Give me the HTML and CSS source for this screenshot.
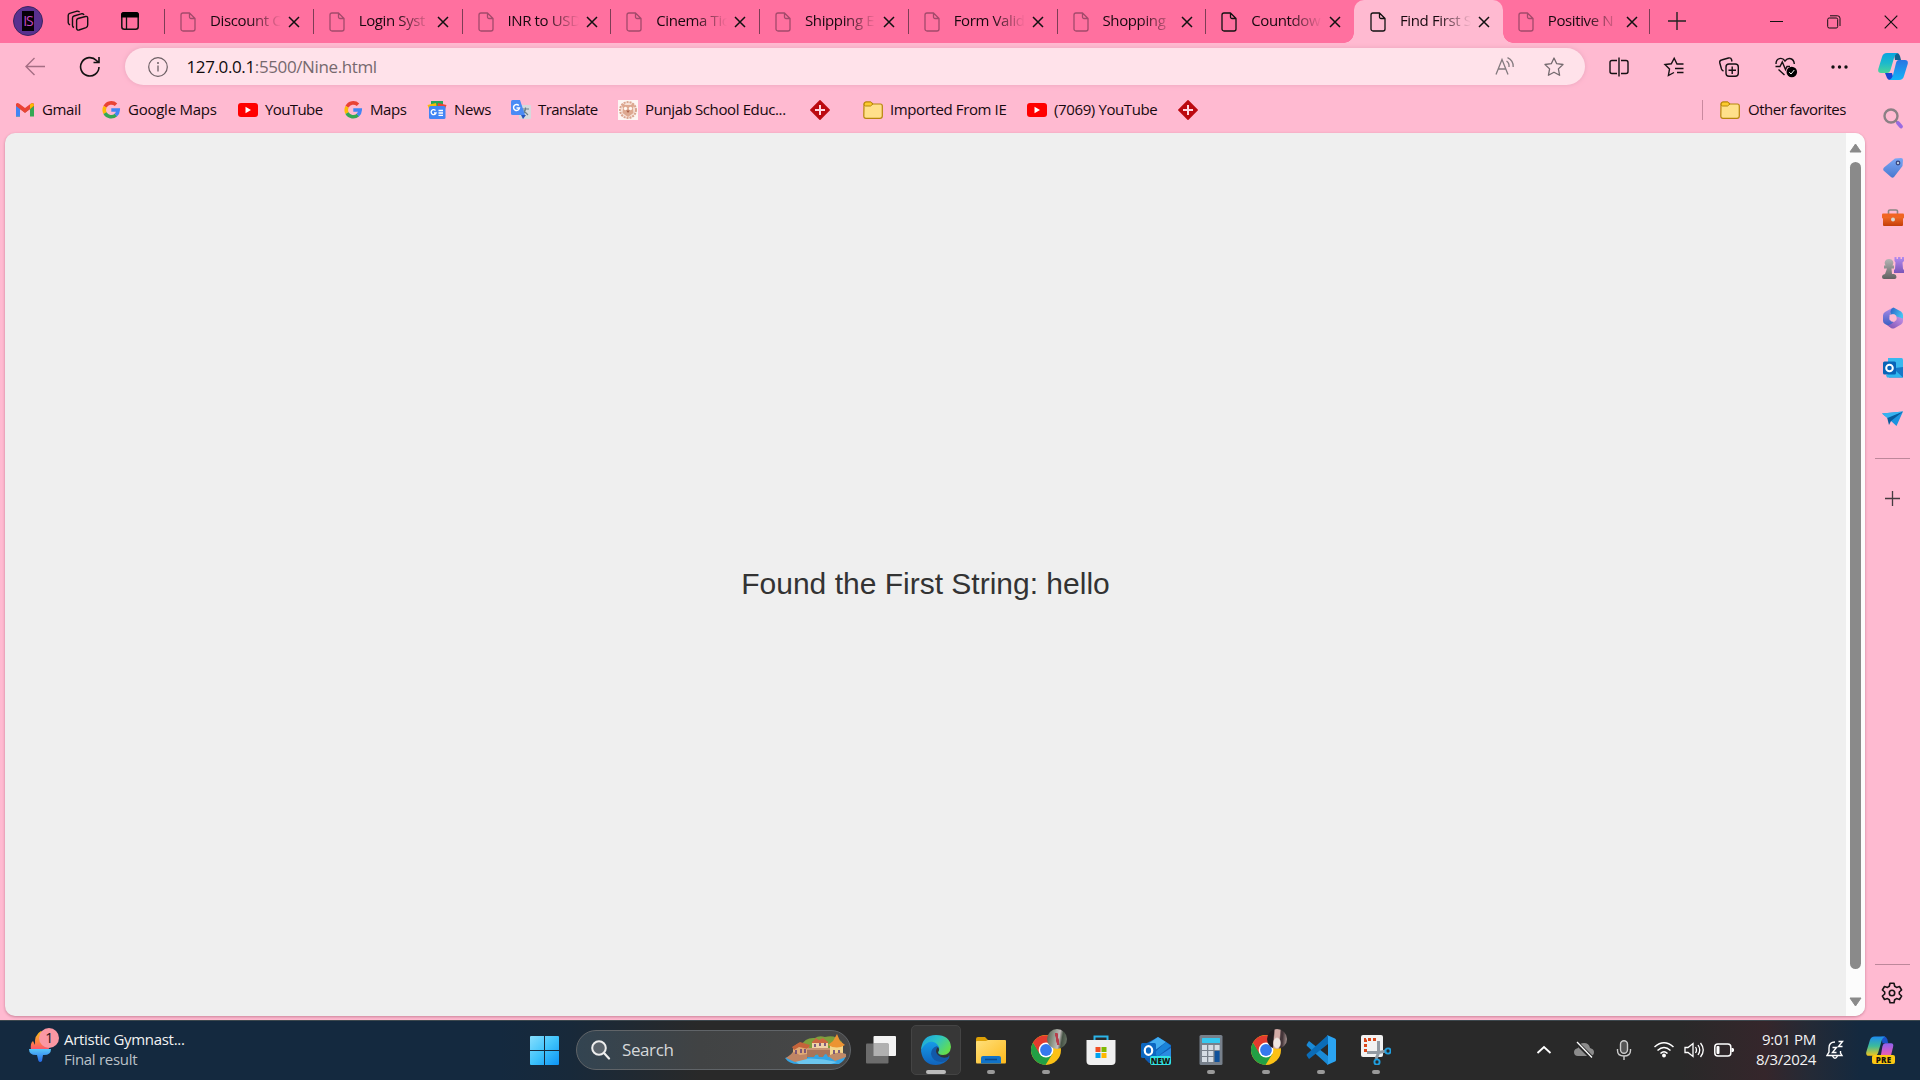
FILE: index.html
```html
<!DOCTYPE html>
<html lang="en">
<head>
<meta charset="utf-8">
<title>Find First String</title>
<link rel="stylesheet" href="styles.css">
</head>
<body>
<svg class="defs" width="0" height="0" aria-hidden="true">
  <defs>
    <linearGradient id="edgeTop" x1="0" y1="0" x2="1" y2=".6"><stop offset="0" stop-color="#1b9de2"/><stop offset=".5" stop-color="#2cc4c6"/><stop offset="1" stop-color="#64dd4d"/></linearGradient>
    <linearGradient id="edgeLow" x1="0" y1="0" x2="0" y2="1"><stop offset="0" stop-color="#169ce8"/><stop offset="1" stop-color="#1063bd"/></linearGradient>
    <linearGradient id="win" x1="0" y1="0" x2="1" y2="1"><stop offset="0" stop-color="#87defd"/><stop offset=".5" stop-color="#3fc3fb"/><stop offset="1" stop-color="#0c93f5"/></linearGradient>
    <linearGradient id="folderG" x1="0" y1="0" x2="1" y2="1"><stop offset="0" stop-color="#ffe07c"/><stop offset="1" stop-color="#fdb91b"/></linearGradient>
    <linearGradient id="cpA" x1="0" y1="0" x2="0" y2="1"><stop offset="0" stop-color="#0aa5df"/><stop offset=".5" stop-color="#1cb9cc"/><stop offset="1" stop-color="#4bd598"/></linearGradient>
    <linearGradient id="cpB" x1="0" y1="0" x2="0" y2="1"><stop offset="0" stop-color="#2a74e2"/><stop offset="1" stop-color="#13b4f7"/></linearGradient>
    <linearGradient id="cpC" x1="0" y1="0" x2="0" y2="1"><stop offset="0" stop-color="#1d8cf0"/><stop offset=".5" stop-color="#3cbb9a"/><stop offset="1" stop-color="#f3c51c"/></linearGradient>
    <linearGradient id="cpD" x1="0" y1="0" x2="0" y2="1"><stop offset="0" stop-color="#8d62ef"/><stop offset=".5" stop-color="#dd5bc1"/><stop offset="1" stop-color="#fa7d62"/></linearGradient>
    <linearGradient id="tagG" x1="0" y1="0" x2="0" y2="1"><stop offset="0" stop-color="#7aa7f5"/><stop offset="1" stop-color="#4878cf"/></linearGradient>
    <linearGradient id="boxG" x1="0" y1="0" x2="0" y2="1"><stop offset="0" stop-color="#f06a26"/><stop offset="1" stop-color="#c43d08"/></linearGradient>
    <linearGradient id="greyG" x1="0" y1="0" x2="0" y2="1"><stop offset="0" stop-color="#b5b5b5"/><stop offset="1" stop-color="#616161"/></linearGradient>
    <linearGradient id="purpG" x1="0" y1="0" x2="0" y2="1"><stop offset="0" stop-color="#b38bf0"/><stop offset="1" stop-color="#7a55b8"/></linearGradient>
    <linearGradient id="flameG" x1="0" y1="0" x2="0" y2="1"><stop offset="0" stop-color="#f8bd19"/><stop offset=".6" stop-color="#fb8145"/><stop offset="1" stop-color="#fb4f72"/></linearGradient>
    <linearGradient id="bowlG" x1="0" y1="0" x2="0" y2="1"><stop offset="0" stop-color="#58c7fa"/><stop offset="1" stop-color="#2468e8"/></linearGradient>
    <linearGradient id="mL" x1="0" y1="0" x2="0" y2="1"><stop offset="0" stop-color="#b08be8"/><stop offset="1" stop-color="#2f5cc0"/></linearGradient>
    <linearGradient id="mT" x1="0" y1="0" x2="1" y2=".5"><stop offset="0" stop-color="#2a5fc4"/><stop offset="1" stop-color="#45c4f2"/></linearGradient>
    <linearGradient id="mB" x1="0" y1="1" x2="1" y2="0"><stop offset="0" stop-color="#7a4fb0"/><stop offset="1" stop-color="#c795ea"/></linearGradient>
    <symbol id="page" viewBox="0 0 16 20"><path d="M3 1H9.5L15 6.500V17a2 2 0 0 1-2 2H3a2 2 0 0 1-2-2V3a2 2 0 0 1 2-2ZM9.500 1V5a1.500 1.500 0 0 0 1.500 1.500H15" fill="none" stroke="currentColor" stroke-width="1.3" stroke-linejoin="round"/></symbol>
    <symbol id="close" viewBox="0 0 12 12"><path d="M1 1 11 11M11 1 1 11" stroke="currentColor" stroke-width="1.5"/></symbol>
    <symbol id="google" viewBox="0 0 20 20"><path d="M4 6.800A7 7 0 0 1 15 4.800" stroke="#ea4335"/><path d="M4 13.200A7.200 7.200 0 0 1 4 6.800" stroke="#fbbc05"/><path d="M15 15A7.200 7.200 0 0 1 4 13.200" stroke="#34a853"/><path d="M10.300 10H17.200A7.200 7.200 0 0 1 14.700 15.200" stroke="#4285f4"/></symbol>
    <symbol id="youtube" viewBox="0 0 20 20"><rect y="3" width="20" height="14" rx="3" fill="#f00"/><path d="M7.500 6.800V13.200L13 10Z" fill="#fff"/></symbol>
    <symbol id="cross" viewBox="0 0 20 20"><path d="M10 .8 19.200 10 10 19.200.8 10Z" fill="#bb0a10" stroke="#bb0a10" stroke-width="1.500" stroke-linejoin="round"/><path d="M10 5V15M5 10H15" stroke="#ffd8e2" stroke-width="2"/></symbol>
    <symbol id="folder" viewBox="0 0 20 20"><path d="M1 4.500Q1 2 3 2H7.500L10 4H17.500Q19.300 4 19.300 6V16Q19.300 18.300 17 18.300H3Q.8 18.300.8 16Z" fill="#ffe08a" stroke="#b8860b" stroke-width="1.200"/><path d="M1 5Q1 2 3 2H7.500L10 4 7.500 6H2.500Z" fill="#fccb2e" stroke="#b8860b"/></symbol>
    <symbol id="chrome" viewBox="0 0 30 30"><circle cx="15" cy="15" r="15" fill="#fbc116"/><path d="M2 7.500A15 15 0 0 0 14.500 30L21.500 18.700 9 18.500Z" fill="#22a045"/><path d="M2 7.500 8.500 18.800 15 8H28A15 15 0 0 0 2 7.500Z" fill="#e33b2e"/><circle cx="15" cy="15" r="7.400" fill="#fff"/><circle cx="15" cy="15" r="5.900" fill="#3579ee"/></symbol>
  </defs>
</svg>

<div class="browser">
  <header class="tabbar">
    <div class="tab-tools">
      <div class="profile"><span>IS</span></div>
      <svg class="ico-workspaces" viewBox="0 0 22 22" fill="none" stroke="#111" stroke-width="1.400"><path d="M11 8.500 18.500 6.500Q20.500 6 20.700 8V15Q20.700 17 19 17.700L12 20Q10 20.500 9.600 18.500V10.500Q9.600 9 11 8.500ZM7 17.500Q5.500 17 5.500 15.500V8Q5.500 6.500 7 6L15 3.700Q16.500 3.500 17 5M3 15Q1.200 14 1.200 12.500V5.500Q1.200 4 2.700 3.400L10 1.200Q12 .8 12.500 2.200"/></svg>
      <svg class="ico-vtabs" viewBox="0 0 18 18"><rect x=".8" y=".8" width="16.400" height="16.400" rx="2.500" fill="none" stroke="#111" stroke-width="1.500"/><path d="M0 5.500V3Q0 0 3 0H15Q18 0 18 3V5.500Z"/><path d="M5.500 5V17" stroke="#111" stroke-width="1.300"/></svg>
    </div>
    <nav class="tabs">
      <div class="tab"><svg class="pg"><use href="#page"/></svg><span>Discount C</span><svg class="x"><use href="#close"/></svg></div>
      <div class="tab"><svg class="pg"><use href="#page"/></svg><span>Login Syst</span><svg class="x"><use href="#close"/></svg></div>
      <div class="tab"><svg class="pg"><use href="#page"/></svg><span>INR to USD</span><svg class="x"><use href="#close"/></svg></div>
      <div class="tab"><svg class="pg"><use href="#page"/></svg><span>Cinema Tic</span><svg class="x"><use href="#close"/></svg></div>
      <div class="tab"><svg class="pg"><use href="#page"/></svg><span>Shipping E</span><svg class="x"><use href="#close"/></svg></div>
      <div class="tab"><svg class="pg"><use href="#page"/></svg><span>Form Valid</span><svg class="x"><use href="#close"/></svg></div>
      <div class="tab"><svg class="pg"><use href="#page"/></svg><span>Shopping</span><svg class="x"><use href="#close"/></svg></div>
      <div class="tab loaded"><svg class="pg"><use href="#page"/></svg><span>Countdow</span><svg class="x"><use href="#close"/></svg></div>
      <div class="tab active"><svg class="pg"><use href="#page"/></svg><span>Find First S</span><svg class="x"><use href="#close"/></svg></div>
      <div class="tab last"><svg class="pg"><use href="#page"/></svg><span>Positive N</span><svg class="x"><use href="#close"/></svg></div>
    </nav>
    <svg class="newtab" viewBox="0 0 18 18"><path d="M9 0V18M0 9H18" stroke="#222" stroke-width="1.400"/></svg>
    <div class="winctl">
      <svg width="14" height="14"><path d="M0 6.500H13" stroke="#111"/></svg>
      <svg width="14" height="14" fill="none" stroke="#111"><rect x=".7" y="3" width="10" height="10" rx="1.500"/><path d="M3 .8H10.500Q13 .8 13 3.300V11"/></svg>
      <svg width="14" height="14"><path d="M.7.700 13.300 13.300M13.300.7.700 13.300" stroke="#111" stroke-width="1.200"/></svg>
    </div>
  </header>

  <div class="shell">
    <div class="main">
      <div class="toolbar">
        <div class="nav">
          <svg width="20" height="20" fill="none" stroke="#a56e84" stroke-width="1.400"><path d="M20 9.500H1M9.500 1 1 9.500 9.500 18"/></svg>
          <svg width="22" height="22" fill="none" stroke="#111" stroke-width="1.600"><path d="M20 11A9.200 9.200 0 1 1 17.500 4.500L19.500 6.300M20 1V6.500H14.500"/></svg>
        </div>
        <div class="address">
          <svg class="info" viewBox="0 0 20 20"><circle cx="10" cy="10" r="9.300" fill="none" stroke="#6c5f64" stroke-width="1.200"/><path d="M10 8.500V14.500" stroke="#6c5f64" stroke-width="1.300"/><circle cx="10" cy="6" r="1" fill="#6c5f64"/></svg>
          <p><b>127.0.0.1</b>:5500/Nine.html</p>
          <svg class="read" viewBox="0 0 20 20" fill="none" stroke="#847a7f" stroke-width="1.300"><path d="M1 17.500 7 2.500 13 17.500M3 12H11M11.500 4Q14.500 6 14 10M12.500.700Q18.500 3.500 18.200 10"/></svg>
          <svg class="star" viewBox="0 0 20 20"><path d="M10 1 12.700 6.700 19 7.500 14.400 11.900 15.600 18.300 10 15.200 4.400 18.300 5.600 11.900 1 7.500 7.300 6.700Z" fill="none" stroke="#756a6f" stroke-width="1.300" stroke-linejoin="round"/></svg>
        </div>
        <div class="actions">
          <svg viewBox="0 0 20 20"><path d="M8 3.500H3Q1 3.500 1 5.500V14.500Q1 16.500 3 16.500H8M12 3.500H17Q19 3.500 19 5.500V14.500Q19 16.500 17 16.500H12M10 .5V19.500"/></svg>
          <svg viewBox="0 0 20 20"><path d="M19.500 7H13L10.200 1.200 7.300 6.800 1 7.600 5.500 12 4.400 18.500 10 15.500M11 11.500H19.500M13 15.500H19.500"/></svg>
          <svg viewBox="0 0 20 20"><rect x="7" y="7" width="12.300" height="12.300" rx="3"/><path d="M13.200 9.500V17M9.500 13.200H17M4.500 14Q3 13.500 2.500 12L.8 6Q.3 3.500 2.500 3L9.500 1Q12 .5 12.500 2.500L13 4.500"/></svg>
          <svg viewBox="0 0 22 20"><path d="M1 7C1 1 7-.500 10 4 13.500-.500 19 1.500 19.300 7M.5 9.500H5L7.300 5 10.500 12.500 12 9.500H15M3.500 12.500 9.500 18"/><circle cx="16.800" cy="15" r="5.300" fill="#000" stroke="none"/><path d="M14.300 15.200 16 17 19.300 13" stroke="#fff" stroke-width="1"/></svg>
          <svg viewBox="0 0 20 20"><g fill="#111" stroke="none"><circle cx="3" cy="10" r="1.700"/><circle cx="9.500" cy="10" r="1.700"/><circle cx="16" cy="10" r="1.700"/></g></svg>
        </div>
      </div>
      <div class="bookmarks">
        <a><svg viewBox="0 0 20 20"><path d="M1 4.500V16.500H5V9L10 12.500 15 9V16.500H19V4.500L10 11.200Z" fill="#34a853"/><path d="M1 5V16.500H5V8Z" fill="#4285f4"/><path d="M1 6V4Q2 2.500 4 3.500L10 8 16 3.500Q18 2.500 19 4V6L10 13Z" fill="#ea4335"/><path d="M15 4.500 17 3.200Q19 3 19 5.500L15 9Z" fill="#fbbc04"/></svg><span>Gmail</span></a>
        <a><svg class="g"><use href="#google"/></svg><span class="wide">Google Maps</span></a>
        <a><svg><use href="#youtube"/></svg><span class="tight">YouTube</span></a>
        <a><svg class="g"><use href="#google"/></svg><span>Maps</span></a>
        <a><svg viewBox="0 0 20 20"><path d="M4 1H16V8H4Z" fill="#25a55a"/><path d="M.5 5 9 3 10 9H2Z" fill="#fbbc04"/><path d="M11 3 19.500 5 18 9H10Z" fill="#ea4335"/><rect x="2" y="6" width="16.500" height="13" rx="1.500" fill="#4285f4"/><path d="M8.500 10.500A2.500 2.500 0 1 0 9 13H7M11.500 10.500H16M11.500 13H16M11.500 15.300H16" stroke="#fff" stroke-width="1.300" fill="none"/></svg><span>News</span></a>
        <a><svg viewBox="0 0 20 20"><rect x="8" y="5" width="12" height="14" rx="1" fill="#d6d9dc"/><path d="M11 9H18M14.500 7.500V9Q14 13 11.500 14M12.500 10.500 17 15" stroke="#67808a" stroke-width="1.200" fill="none"/><path d="M10 15H15L12 19Z" fill="#2454bd"/><path d="M1.500 0H9L14 15H1.500Q0 15 0 13.500V1.500Q0 0 1.500 0Z" fill="#4a8bf5"/><path d="M7.800 5.500A3 3 0 1 0 8.500 8H5.500" fill="none" stroke="#fff" stroke-width="1.400"/></svg><span class="tight">Translate</span></a>
        <a><svg viewBox="0 0 20 20"><rect width="20" height="20" fill="#fdf6f3"/><circle cx="10" cy="10" r="8" fill="#f6e0d6" stroke="#d9a48e" stroke-width="2" stroke-dasharray="2 1"/><path d="M3.500 5Q5 2.500 7 5H13Q15 2.500 16.500 5L15 8 15.500 13 10 17 4.500 13 5 8Z" fill="#dda890"/><circle cx="7.500" cy="8.500" r="1.700" fill="#fff6f0"/><circle cx="12.500" cy="8.500" r="1.700" fill="#fff6f0"/><path d="M8.200 10.500H11.800L10 13Z" fill="#a95f47"/></svg><span>Punjab School Educ...</span></a>
        <a><svg><use href="#cross"/></svg></a>
        <a><svg><use href="#folder"/></svg><span>Imported From IE</span></a>
        <a><svg><use href="#youtube"/></svg><span>(7069) YouTube</span></a>
        <a><svg><use href="#cross"/></svg></a>
        <a class="other"><svg><use href="#folder"/></svg><span>Other favorites</span></a>
      </div>
      <div class="viewport">
        <main><p>Found the First String: hello</p></main>
        <div class="scrollbar">
          <svg width="13" height="10"><path d="M6.500 1 12 9H1Z" fill="#8a8a8a" stroke="#8a8a8a" stroke-linejoin="round"/></svg>
          <i></i>
          <svg width="13" height="10"><path d="M6.500 9 12 1H1Z" fill="#8a8a8a" stroke="#8a8a8a" stroke-linejoin="round"/></svg>
        </div>
      </div>
    </div>

    <aside class="sidebar">
      <svg class="copilot" viewBox="0 0 30 28"><path d="M16 0H19Q21 0 22 3L23 7H17Z" fill="#12628f"/><path d="M7 20 9 25Q10 27.500 13 27H16L14 20Z" fill="#1746d3"/><path d="M9 0H20Q17 1 16 5L12.500 17Q11.500 20 9 20H3Q-.5 20 .3 16L4 4Q5 0 9 0Z" fill="url(#cpA)"/><path d="M21 7H27Q30.500 7 29.700 11L26 23Q25 27 21 27H11Q14 26 15 22L18 10Q18.700 7 21 7Z" fill="url(#cpB)"/></svg>
      <svg viewBox="0 0 22 22"><circle cx="9" cy="9" r="6.500" fill="none" stroke="#8c8085" stroke-width="2.400"/><path d="M14 14 16 16" stroke="#8c8085" stroke-width="2"/><path d="M16 16 19 19.500" stroke="#9a6be0" stroke-width="3.700" stroke-linecap="round"/></svg>
      <svg viewBox="0 0 22 22"><path d="M13 1.500 19 1Q21 1 21 3L20.500 9 12 20Q10.500 21.500 9 20L1.500 13.500Q.5 12 2 10.500Z" fill="url(#tagG)"/><circle cx="16" cy="6" r="1.800" fill="#bcd" stroke="#37427e" stroke-width="1.200"/></svg>
      <svg viewBox="0 0 22 22"><path d="M6.500 7V4Q6.500 3 8 3H14Q15.500 3 15.500 4V7" fill="none" stroke="#8b8583" stroke-width="1.600"/><rect y="6.500" width="22" height="5" rx="1" fill="#f16422"/><rect x="1" y="10" width="20" height="9" rx="1" fill="url(#boxG)"/><circle cx="11" cy="12.500" r="2" fill="#d9d6d0"/></svg>
      <svg viewBox="0 0 22 22"><path d="M12.500 0H14.500V2H16V0H18.500V2H20V0H22V4L20.500 5.500 21 12 22 13V16H12V13L13 12 13.500 5.500 12.500 4Z" fill="url(#purpG)"/><path d="M7 2A4 4 0 0 1 10.500 8.500H12V11.500H9.500L10 17H12Q14.500 17.500 14.500 20 14.500 22 12.500 22H2Q0 22 0 20 0 17.500 3 17L5 11.500H2V8.500H3.500A4 4 0 0 1 7 2Z" fill="url(#greyG)"/></svg>
      <svg viewBox="0 0 22 22"><path d="M11 .5 3 5Q1 6 1 8.500V14Q1 16 3 17L8.500 20 12 15 7.500 13V8.500Z" fill="url(#mL)"/><path d="M8.500 6.500Q8 2 11.500.5L19 4.500Q21 6 21 8V13.500L14.500 10.500V9Q12 6 8.500 8Z" fill="url(#mT)"/><path d="M21 11.500V14Q21 16 19 17.500L12.500 21.300Q10.500 22 9 21L5.500 18.500Q9 18 11.500 15L14.500 13V9.500Z" fill="url(#mB)"/><path d="M9.300 7.500H12.700L14.700 11 12.700 14.500H9.300L7.500 11Z" fill="#ffbad1"/></svg>
      <svg viewBox="0 0 22 22"><path d="M6 1H19.500Q21 1 21 3V20H6Z" fill="#38b8ef"/><path d="M5 12 21 10V20.500H7Z" fill="#1678c8"/><path d="M4 18 14 14 21 20.500H5Z" fill="#2fb6ef"/><rect x="1" y="4.500" width="13" height="13" rx="1.500" fill="#0864b8"/><circle cx="7.500" cy="11" r="3.300" fill="none" stroke="#fff" stroke-width="2"/></svg>
      <svg viewBox="0 0 22 22"><path d="M0 5.500 21 3.500 14.500 18 9 13Z" fill="#1b94df"/><path d="M5 9 21 3.500 9 13 7 17Z" fill="#075b9c"/><path d="M0 5.500 21 3.500 5.500 10Z" fill="#35b2f0"/></svg>
      <hr>
      <svg class="plus" viewBox="0 0 16 16"><path d="M7.500 0V15M0 7.500H15" stroke="#443b40" stroke-width="1.300"/></svg>
      <hr class="low">
      <svg class="gear" viewBox="0 0 22 22" fill="none" stroke="#181316" stroke-width="1.600" stroke-linejoin="round"><circle cx="11" cy="11" r="2.700"/><path d="M9 1.200H13L13.700 4.300 15.500 5.400 18.500 4.500 20.600 8 18.300 10V12L20.600 14 18.500 17.500 15.500 16.600 13.700 17.700 13 20.800H9L8.300 17.700 6.500 16.600 3.500 17.500 1.400 14 3.700 12V10L1.400 8 3.500 4.500 6.500 5.400 8.300 4.300Z"/></svg>
    </aside>
  </div>
</div>

<footer class="taskbar">
  <div class="widget">
    <svg viewBox="0 0 22 34"><path d="M2 21Q1 14 4 12L6 16Q5 6 12 2 20 6 20 21Z" fill="url(#flameG)"/><path d="M0 20H22Q22 26 15 26H7Q0 26 0 20ZM8 26H14L13 32Q11 34 9.500 32Z" fill="url(#bowlG)"/></svg>
    <span class="badge">1</span>
    <div><p class="head">Artistic Gymnast...</p><p class="sub">Final result</p></div>
  </div>
  <div class="center">
    <svg class="start" viewBox="0 0 29 29"><path d="M1 0H14V14H0V1Q0 0 1 0ZM15 0H28Q29 0 29 1V14H15ZM0 15H14V29H1Q0 29 0 28ZM15 15H29V28Q29 29 28 29H15Z" fill="url(#win)"/></svg>
    <div class="search">
      <svg class="lens" viewBox="0 0 20 20"><circle cx="8" cy="8" r="6.800" fill="#5b646c" stroke="#eee" stroke-width="2"/><path d="M13 13 18 18.500" stroke="#eee" stroke-width="2.200" stroke-linecap="round"/></svg>
      <span>Search</span>
      <svg class="village" viewBox="0 0 62 32"><path d="M16 12Q20 3 30 4 34 1 40 3 50 0 57 8V22H15Z" fill="#7d9f3c"/><path d="M0 24Q10 20 20 24 42 16 61 20 61 26 54 30H13Q4 30 0 24Z" fill="#35a5e4"/><path d="M8 26Q30 22 52 28L46 30H14Z" fill="#6cc6ef"/><path d="M5 22 8 18V13L14 9 24 12V22L12 27Z" fill="#e0a976"/><path d="M1 24 9 18 15 21 22 20V25L10 28Z" fill="#c08564"/><path d="M7 13 15 8 25 11 23 15 14 13 9 16Z" fill="#c4633a"/><path d="M22 15H47V23H43Q41 17 38 23H34Q32 17 29 23H22Z" fill="#a8745a"/><path d="M22 14H47V16H22Z" fill="#c99572"/><path d="M27 8H43V14H27Z" fill="#f0d3a8"/><path d="M27 8 31 4 34 6 38 4 43 8V9H27Z" fill="#cb6740"/><path d="M45 12H58V23H45Z" fill="#f3d58b"/><path d="M43 11 48 7 52 0 55 7 60 11Q52 16 43 11Z" fill="#ec9332"/><path d="M43 22Q52 16 61 20V23L50 27Z" fill="#c08a67"/><path d="M11 16V20M16 15V19M20 15V19M30 10V13M35 9V12M40 9V12M49 16V20M54 16V19" stroke="#6d4a78" stroke-width="1.700"/></svg>
    </div>
    <div class="apps">
      <div class="app"><svg viewBox="0 0 30 30"><rect x="7.500" y="1" width="22.500" height="20" rx="1" fill="#f3f3f3"/><rect y="8.500" width="22.500" height="20" rx="1" fill="#6c6c6c"/><path d="M7.500 8.500H22.500V21H7.500Z" fill="#b0b0b0"/></svg></div>
      <div class="app current"><svg viewBox="0 0 30 30"><path d="M0 16Q1 6 9 6 18 6 21 13L16 22Q20 26 28 23 23 30 15 30 2 30 0 16Z" fill="url(#edgeLow)"/><path d="M0 15Q1 0 15 0 29 0 30 12 29 20 22 20 17 20 17 17 19 15 18 12 15 6 8 7 3 9 0 15Z" fill="url(#edgeTop)"/><path d="M10 19Q10 13 16 11 19 14 17 17 17 20 21 21 24 22 28 20 29 21 28 23 25 27 20 27 11 26 10 19Z" fill="#1359a8"/><path d="M17 12Q19 15 17 17 17 20 21 21L28 20 27 22Q21 24 17 20 13 16 17 12Z" fill="#303335"/></svg></div>
      <div class="app run"><svg viewBox="0 0 30 30"><path d="M0 4Q0 2 2 2H9L12 5H15V10H0Z" fill="#dda006"/><path d="M0 7Q0 6 1 6H10L12 5H29Q30 5 30 6V27Q30 28.500 29 28.500H1Q0 28.500 0 27Z" fill="url(#folderG)"/><path d="M5 28.500V23Q5 21 7 21H23Q25 21 25 23V28.500Z" fill="#1173c8"/><path d="M9 24.500H21" stroke="#0a4a8c" stroke-width="1.500"/></svg></div>
      <div class="app run"><svg viewBox="0 0 30 30"><use href="#chrome" width="30" height="30"/></svg><span class="avatar forest"></span></div>
      <div class="app"><svg viewBox="0 0 30 30"><path d="M8.500 6V1.500H21.500V6" fill="none" stroke="#2bb4e7" stroke-width="2"/><path d="M.5 5H29.500V26Q29.500 30 25.500 30H4.500Q.5 30 .5 26Z" fill="#f0f0f0"/><path d="M9.500 12H14.500V17H9.500Z" fill="#f04e23"/><path d="M15.500 12H20.500V17H15.500Z" fill="#7fb900"/><path d="M9.500 18H14.500V23H9.500Z" fill="#00a3ee"/><path d="M15.500 18H20.500V23H15.500Z" fill="#ffb800"/></svg></div>
      <div class="app"><svg viewBox="0 0 30 30"><path d="M4 9 17 2 30 10V28H8L4 24Z" fill="#0f5bb3"/><path d="M8 8 17 2 25 7 13 16Z" fill="#41adf0"/><path d="M14 17 25 7 30 11 16 22Z" fill="#1a83d8"/><path d="M13 24 30 13V28H13Z" fill="#2b8be0"/><rect y="8" width="15" height="15" rx="1.500" fill="#0b67c1"/><ellipse cx="7.500" cy="15.500" rx="3.700" ry="4.300" fill="none" stroke="#fff" stroke-width="2.200"/></svg><span class="label new">NEW</span></div>
      <div class="app run"><svg viewBox="0 0 30 30"><rect x="3.500" width="23" height="30" rx="1.500" fill="#77808b"/><rect x="6" y="3" width="18" height="5" rx=".5" fill="#35c8f0"/><path d="M6 10H11V15H6ZM12.300 10H17.300V15H12.300ZM18.600 10H23.600V15H18.600ZM6 16H11V21H6ZM12.300 16H17.300V21H12.300ZM6 22H11V27H6ZM12.300 22H17.300V27H12.300Z" fill="#d5dce4"/><path d="M18.600 16H23.600V27H18.600Z" fill="#11529b"/></svg></div>
      <div class="app run"><svg viewBox="0 0 30 30"><use href="#chrome" width="30" height="30"/></svg><span class="avatar portrait"></span></div>
      <div class="app run"><svg viewBox="0 0 30 30"><path d="M3 6 22 21V30L1 11Q0 10 1 9Z" fill="#1a8ad6"/><path d="M3 24 22 9V0L1 19Q0 20 1 21Z" fill="#0b6cb7"/><path d="M21 0 29 3.500Q30 4 30 5V25Q30 26 29 26.500L21 30Q22 29 22 28V2Q22 1 21 0Z" fill="#2ba4f2"/></svg></div>
      <div class="app run"><svg viewBox="0 0 30 30"><rect width="22" height="22" rx="2" fill="#f2f2f2"/><path d="M4.500 17V4.500H17" fill="none" stroke="#dc4618" stroke-width="3" stroke-dasharray="3 2"/><path d="M17.500 6V18L15 24M6 17.500H18L25 16" fill="none" stroke="#929aa2" stroke-width="3"/><circle cx="27" cy="16" r="2.600" fill="none" stroke="#209fe0" stroke-width="1.900"/><circle cx="16" cy="27" r="2.600" fill="none" stroke="#209fe0" stroke-width="1.900"/></svg></div>
    </div>
  </div>
  <div class="tray">
    <svg width="16" height="20"><path d="M1.500 13 8 7 14.500 13" fill="none" stroke="#fff" stroke-width="1.800"/></svg>
    <svg width="22" height="20"><path d="M5 16Q1 16 1 12 1 9 5 8 6 3 11 3 16 3 17 8 21 9 21 12 21 16 17 16Z" fill="#8c8c8c"/><path d="M3 2 19 18" stroke="#292929" stroke-width="4"/><path d="M4 2 19 17.500" stroke="#fff" stroke-width="1.300"/></svg>
    <svg width="16" height="20" fill="none" stroke="#ccc" stroke-width="1.400"><rect x="4.500" y=".8" width="7" height="12.500" rx="3.500" fill="#555"/><path d="M1.500 9V10.500Q1.500 16 8 16 14.500 16 14.500 10.500V9M8 16V20"/></svg>
    <div class="status">
      <svg width="20" height="20" fill="none" stroke="#fff" stroke-width="1.500"><path d="M.5 7Q10-1.500 19.500 7M3.500 10.500Q10 4.500 16.500 10.500M6.500 13.500Q10 10 13.500 13.500"/><circle cx="10" cy="15.500" r="1.200" fill="#fff"/></svg>
      <svg width="20" height="20" fill="none" stroke="#fff" stroke-width="1.300"><path d="M1 7.500H4L9 3.500V16.500L4 12.500H1ZM11.500 7Q13.500 10 11.500 13M14 5Q17.500 10 14 15M16.500 3Q22 10 16.500 17"/></svg>
      <svg width="20" height="20"><rect x=".8" y="4" width="16" height="12" rx="3" fill="none" stroke="#fff" stroke-width="1.500"/><rect x="2.500" y="6" width="3" height="8" rx="1" fill="#fff"/><path d="M17.500 8H19L20 9V11L19 12H17.500Z" fill="#fff"/></svg>
    </div>
    <div class="clock"><p>9:01 PM</p><p>8/3/2024</p></div>
    <svg class="bell" width="18" height="20" fill="none" stroke="#fff" stroke-width="1.400"><path d="M9 2Q3 2 3 8V12L1 15.500H16L14.500 13V11M6.500 16Q9 20.500 11.500 16M6.500 7.500H10.500L6.500 12.500H10.500M12.500 1.500H16.500L12.500 6.500H16.500"/></svg>
    <div class="pre"><svg viewBox="0 0 30 28"><path d="M16 0H19Q21 0 22 3L23 7H17Z" fill="#1b52c9"/><path d="M9 0H20Q17 1 16 5L12.500 17Q11.500 20 9 20H3Q-.5 20 .3 16L4 4Q5 0 9 0Z" fill="url(#cpC)"/><path d="M20 7H26Q29 7 28 11L25 23Q24 27 20 27H11Q14 26 15 22L17 10Q17.700 7 20 7Z" fill="url(#cpD)"/></svg><span class="label">PRE</span></div>
  </div>
</footer>
</body>
</html>
```

FILE: styles.css
```css
* { box-sizing: border-box; }
body {
  margin: 0;
  width: 1920px;
  height: 1080px;
  overflow: hidden;
  display: flex;
  flex-direction: column;
  font: 15px/20px "Open Sans", "Noto Sans", sans-serif;
  letter-spacing: -0.38px;
  color: #17090f;
}
p { margin: 0; }
svg { display: block; flex: none; }
.defs { position: absolute; }
.browser { height: 1020px; display: flex; flex-direction: column; background: #ffbad1; }

/* Tab strip */
.tabbar { height: 43px; flex: none; display: flex; background: #ff709f; }
.tab-tools { width: 164px; display: flex; align-items: center; padding: 0 0 1px 13px; }
.profile {
  width: 30px; height: 30px; border-radius: 50%;
  background: #58308f; border: 1px solid #3c245f;
  display: grid; place-items: center;
}
.profile span {
  width: 12px; height: 20px; background: #050008; color: #c548c6;
  font-size: 14px; letter-spacing: -1px; text-align: center;
}
.ico-workspaces { width: 22px; height: 22px; margin-left: 24px; }
.ico-vtabs { width: 18px; height: 18px; margin-left: 32px; }
.tabs { display: flex; width: 1486px; }
.tab {
  width: 148.750px; flex: none; display: flex; align-items: center;
  padding-left: 16px; position: relative;
  background: linear-gradient(#7d3d55, #7d3d55) 0 9px / 1px 25px no-repeat;
}
.tab .pg { width: 16px; height: 20px; color: #a34a6b; }
.tab span {
  width: 76px; margin: 0 2px 3px 14px; white-space: nowrap;
  -webkit-mask-image: linear-gradient(90deg, #000 38px, transparent 71px);
  mask-image: linear-gradient(90deg, #000 38px, transparent 71px);
}
.tab .x { width: 12px; height: 12px; color: #111; }
.tab.loaded .pg, .tab.active .pg { color: #111; }
.tab.active { background: #ffbad1; border-radius: 10px 10px 0 0; }
.tab.active::before, .tab.active::after {
  content: ""; position: absolute; bottom: 0; width: 10px; height: 10px;
}
.tab.active::before { left: -10px; background: radial-gradient(circle at 0 0, transparent 9.500px, #ffbad1 10px); }
.tab.active::after { right: -10px; background: radial-gradient(circle at 100% 0, transparent 9.500px, #ffbad1 10px); }
.tab.last { width: 147.500px; padding-left: 15px; background-image: linear-gradient(#7d3d55, #7d3d55); background-position: 100% 9px; }
.newtab { width: 18px; height: 18px; margin: 12px 0 0 18px; }
.winctl { margin-left: auto; display: flex; gap: 43px; padding: 15px 22px 0 0; }

/* Page frame */
.shell { flex: 1; display: grid; grid-template-columns: 1865px 55px; min-height: 0; }
.main { display: flex; flex-direction: column; }
.toolbar { height: 47px; display: flex; padding-top: 5px; }
.nav { width: 125px; height: 37px; display: flex; align-items: center; gap: 34px; padding-left: 25px; }
.address {
  width: 1460px; height: 37px; border-radius: 19px; background: #ffe2ea;
  display: flex; align-items: center; padding: 0 21px 0 22px;
  box-shadow: 0 0 5px #e9a5bc;
}
.address .info { width: 20px; height: 20px; margin-left: 0.500px; }
.address p { margin-left: 19px; font-size: 17px; letter-spacing: -0.38px; color: #76696e; }
.address b { font-weight: 400; color: #100b0d; }
.address .read { width: 20px; height: 20px; margin-left: auto; }
.address .star { width: 20px; height: 20px; margin-left: 29px; }
.actions { display: flex; align-items: center; gap: 35.200px; height: 37px; padding-left: 24px; }
.actions svg { width: 20px; height: 20px; fill: none; stroke: #151013; stroke-width: 1.4; overflow: visible; }
.actions svg:nth-child(4) { width: 22px; margin-right: -2px; }
.bookmarks {
  height: 43px; display: grid; align-items: center; padding: 0 0 3px 15px;
  grid-template-columns: 86px 137px 105px 84px 84px 107px 192px 53px 164px 151px 524px 163px;
}
.bookmarks a { display: flex; gap: 7px; align-items: center; white-space: nowrap; }
.bookmarks svg { width: 20px; height: 20px; }
.bookmarks span { margin-bottom: 2px; }
.bookmarks .wide { letter-spacing: -0.25px; }
.bookmarks .tight { letter-spacing: -0.6px; }
.bookmarks .g { fill: none; stroke-width: 3.6; }
.bookmarks a.other { gap: 8px; height: 20px; border-left: 1px solid #c9899f; padding-left: 17px; justify-self: start; letter-spacing: -0.5px; }
.viewport {
  flex: 1; margin: 0 0 4px 5px; display: flex; overflow: hidden;
  border-radius: 10px; background: #efefef; box-shadow: 0 1px 3px #c98197;
}
main { flex: 1; display: grid; place-items: center; }
main p { font: 30px/36px "Liberation Sans", Arial, sans-serif; letter-spacing: 0; color: #333; padding-top: 19px; }
.scrollbar { width: 19px; background: #fcfcfc; display: flex; flex-direction: column; align-items: center; padding: 10px 0 9px; }
.scrollbar i { width: 11px; flex: 1; margin: 9px 0 28px; border-radius: 6px; background: #8a8a8a; }
.sidebar { display: flex; flex-direction: column; align-items: center; padding: 10px 0 16px; }
.sidebar svg { width: 22px; height: 22px; margin-bottom: 28.200px; }
.sidebar .copilot { width: 30px; height: 28px; margin-bottom: 25.500px; }
.sidebar hr { width: 35px; height: 1px; border: 0; margin: 0; background: #bd879a; }
.sidebar .plus { width: 16px; height: 16px; margin: 32px 0 auto; }
.sidebar .gear { margin: 17px 1px 0 0; }

/* Taskbar */
.taskbar {
  height: 60px; flex: none; display: flex; color: #f3f3f3; border-top: 1px solid #3c474d;
  background: linear-gradient(90deg, #14293f 0 500px, #18293a 570px, #292929 700px 1680px, #35262b 1765px, #242a36 1810px, #14293f 1860px);
}
.widget { width: 530px; display: flex; position: relative; padding: 8px 0 0 29px; }
.widget svg { width: 22px; height: 34px; }
.widget div { margin-left: 13px; white-space: nowrap; letter-spacing: -0.3px; }
.widget .sub { color: #bac1c8; }
.badge {
  position: absolute; left: 39px; top: 7px; width: 20px; height: 20px; border-radius: 50%;
  background: #fa97a3; color: #241317; text-align: center; font-size: 14px; line-height: 19px;
}
.center { display: flex; align-items: center; padding-bottom: 1px; }
.start { width: 29px; height: 29px; }
.search {
  width: 275px; height: 40px; border-radius: 20px; margin-left: 17px;
  display: flex; align-items: center; padding: 0 3px 0 14px; border: 1px solid #606468;
  background: linear-gradient(90deg, #334451, #414344 45%, #474747); color: #d6d8da;
}
.lens { width: 20px; height: 20px; }
.search span { margin-left: 11px; font-size: 17px; letter-spacing: -0.4px; }
.village { width: 62px; height: 32px; margin-left: auto; }
.apps { display: flex; gap: 5px; margin-left: 5px; }
.app { width: 50px; height: 50px; display: grid; place-items: center; position: relative; border-radius: 5px; }
.app > svg { width: 30px; height: 30px; }
.app.current { background: #373737; border: 1px solid #444; }
.app.current::after, .app.run::after {
  content: ""; position: absolute; left: 21px; bottom: 1px; width: 8px; height: 4px; border-radius: 2px; background: #999;
}
.app.current::after { left: 14px; width: 20px; bottom: 0; background: #bbb; }
.avatar { position: absolute; left: 26px; top: 4px; width: 20px; height: 20px; border-radius: 50%; }
.forest {
  background:
    linear-gradient(80deg, transparent 44%, #b73e4b 46% 56%, transparent 58%) 50% 50% / 100% 60% no-repeat,
    linear-gradient(100deg, #4f5e49, #a0a69c 42%, #c2bcbb 58%, #465345 72%, #747d70);
}
.portrait {
  background:
    radial-gradient(ellipse at 50% 70%, #f0e6e2 0 22%, transparent 30%),
    linear-gradient(95deg, #241c20 32%, #d4aaa6 38% 60%, #45363a 66% 75%, #b9a5a2);
}
.label {
  position: absolute; border-radius: 2px; color: #181509; background: #fcc813;
  font: 800 8px/9px "Open Sans", sans-serif; letter-spacing: 0.2px; text-align: center;
}
.label.new { left: 19px; top: 31px; width: 21px; background: #32e2e5; letter-spacing: 0; }
.tray { margin-left: auto; display: flex; align-items: center; padding: 0 25px 1px 0; }
.tray > svg:nth-child(1) { margin-right: 21px; }
.tray > svg:nth-child(2) { margin-right: 21px; }
.status { display: flex; gap: 10px; margin-left: 22px; }
.clock { width: 82px; text-align: right; white-space: nowrap; letter-spacing: -0.3px; padding-bottom: 2px; }
.tray .bell { margin-left: 10px; }
.pre { position: relative; margin-left: 22px; }
.pre svg { width: 29px; height: 28px; }
.pre .label { left: 6px; top: 19px; width: 23px; }
```
